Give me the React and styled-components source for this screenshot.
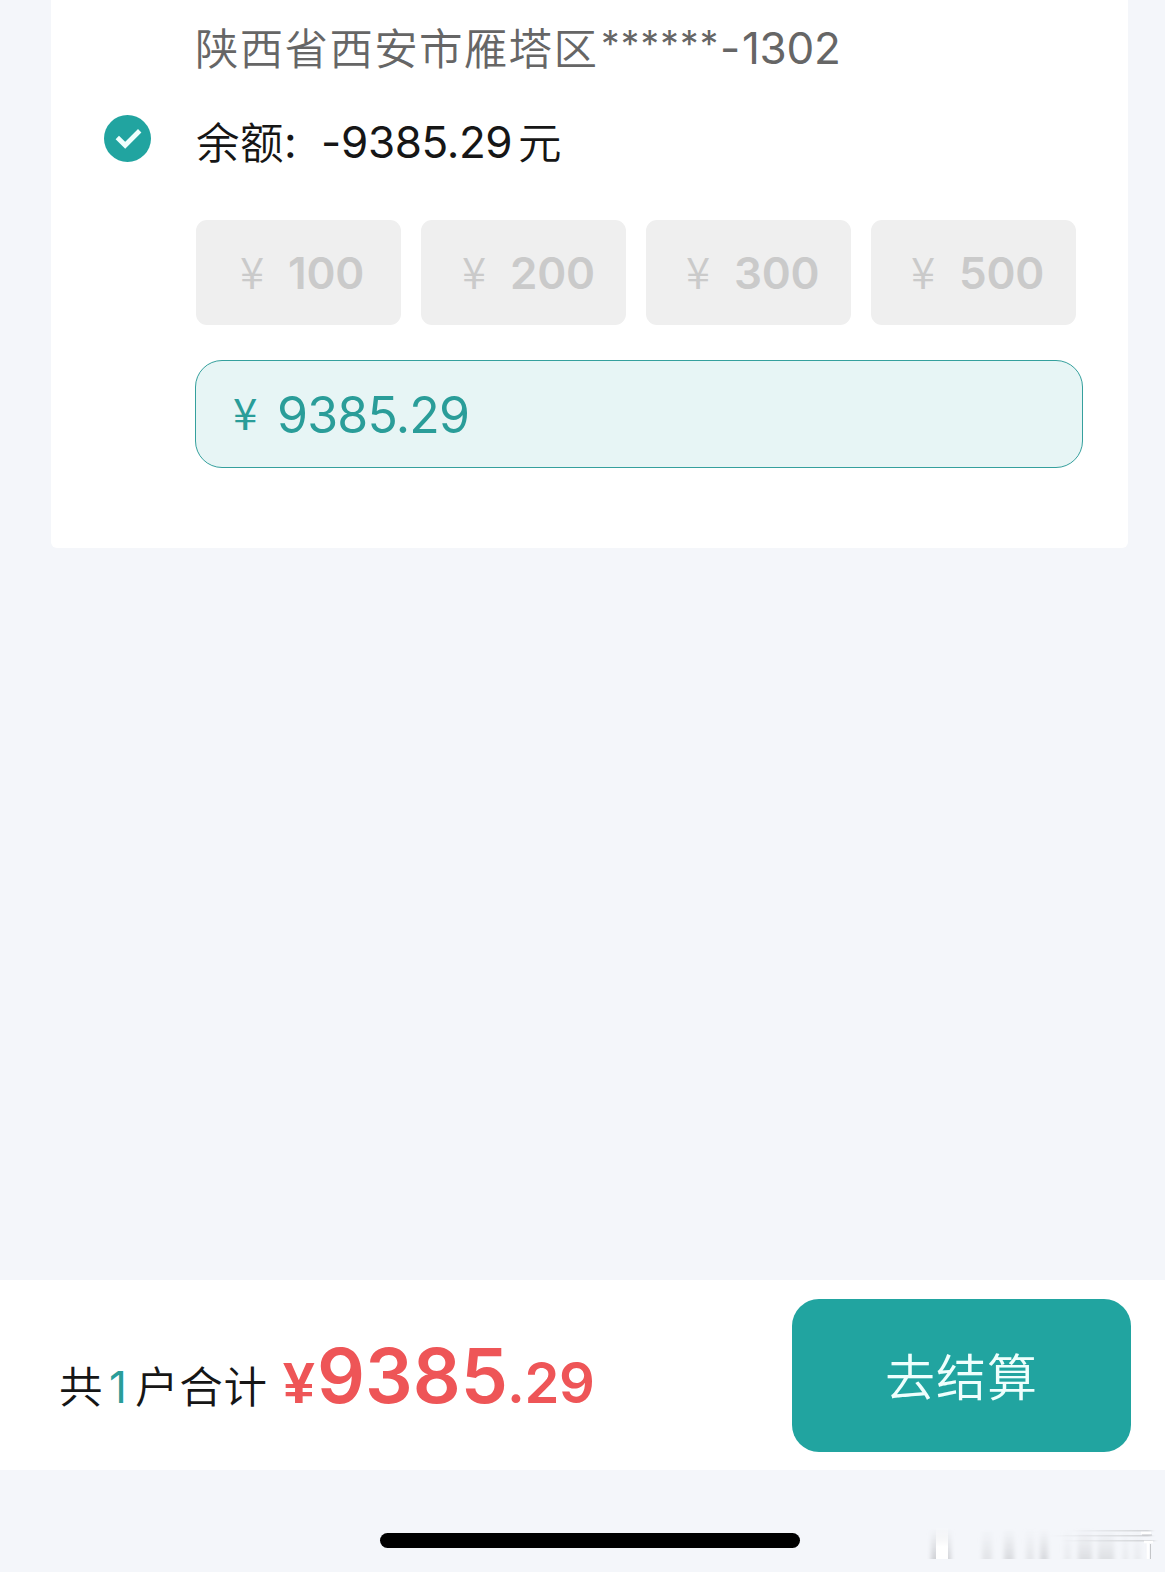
import React, { useState } from 'react';
import styled, { createGlobalStyle } from 'styled-components';

const GlobalStyle = createGlobalStyle`
  * { box-sizing: border-box; }
  body {
    margin: 0;
    background: #f4f6fa;
  }
`

const Page = styled.div`
  width: 1165px;
  height: 1572px;
  overflow: hidden;
  display: flex;
  flex-direction: column;
  background: #f4f6fa;
  color: #161616;
  font-family: Inter, "Noto Sans CJK SC", sans-serif;
`

const Card = styled.section`
  width: 1077px;
  height: 548px;
  margin-left: 51px;
  padding: 16px 45px 0 53px;
  background: #fff;
  border-radius: 0 0 6px 6px;
`

const Line = styled.div`
  display: flex;
  align-items: baseline;
  height: ${p => p.$height}px;
  line-height: ${p => p.$leading || 64}px;
  white-space: pre;
  padding-left: ${p => p.$indent || 0}px;
  color: ${p => p.$color || 'inherit'};
`

// pieces of a line, each one keeps its own tracking
const Piece = styled.span`
  flex: none;
  width: ${p => p.$width}px;
  font-size: ${p => p.$size || 44}px;
  font-weight: ${p => p.$weight || 400};
  letter-spacing: ${p => p.$track || 0}px;
  color: ${p => p.$color || 'inherit'};
`

const Han = styled(Piece)`
  align-self: flex-start;
  font-family: "Noto Sans CJK SC", sans-serif;
  font-size: 43.5px;
  font-weight: 350;
  line-height: ${p => p.$leading || 64}px;
`

const Stars = styled(Piece)`
  align-self: flex-start;
  padding-left: 2px;
  line-height: 56px;
`

const Yen = styled.span`
  flex: none;
  align-self: flex-start;
  font-family: "Noto Sans CJK SC", sans-serif;
  font-size: 44px;
  font-weight: ${p => p.$weight || 350};
  line-height: ${p => p.$leading}px;
  width: ${p => p.$width}px;
`

const BalanceRow = styled.div`
  display: flex;
  height: 111px;
`

const Check = styled.button`
  width: 47px;
  height: 47px;
  margin: 6px 45px 0 0;
  padding: 0;
  border: 0;
  background: none;

  svg { display: block; }
`

const Amounts = styled.div`
  display: flex;
  gap: 20.5px;
  margin-left: 92px;
`

const Amount = styled.button`
  display: flex;
  align-items: baseline;
  width: 204.5px;
  height: 105px;
  padding: 0 0 0 ${p => p.$pad}px;
  border: 0;
  border-radius: 11px;
  background: #efefef;
  color: #cacaca;
  font-family: inherit;
  line-height: 107px;
  text-align: left;
`

const Field = styled.div`
  display: flex;
  align-items: baseline;
  width: 888px;
  height: 108px;
  margin: 35px 0 0 91px;
  padding-left: 37px;
  border: 1.5px solid #35a09d;
  border-radius: 27px;
  background: #e7f5f5;
  color: #2a9d99;
  line-height: 108px;
`

const Footer = styled.footer`
  display: flex;
  justify-content: space-between;
  height: 190px;
  margin-top: 732px;
  padding: 19px 34px 0 59px;
  background: #fff;
`

const Total = styled.div`
  display: flex;
  align-items: baseline;
  line-height: 153px;
  white-space: pre;
`

const TotalText = styled(Piece)`
  font-family: "Noto Sans CJK SC", sans-serif;
  font-size: 43.5px;
  font-weight: 350;
`

const Price = styled.div`
  display: flex;
  align-items: baseline;
  color: #ee5557;
`

const PriceYen = styled(Piece)`
  font-family: "Liberation Sans", sans-serif;
  font-weight: 700;
`

const PayButton = styled.button`
  width: 339px;
  height: 153px;
  padding: 0 0 3px 0;
  border: 0;
  border-radius: 27px;
  background: #21a4a0;
  color: #effffd;
  font-family: "Noto Sans CJK SC", sans-serif;
  font-weight: 350;
  font-size: 50px;
  letter-spacing: 1px;
`

const BottomBar = styled.div`
  display: flex;
  justify-content: flex-end;
  height: 102px;
`

const HomeBar = styled.div`
  width: 420px;
  height: 15px;
  margin: 63px 120px 0 0;
  border-radius: 8px;
  background: #000;
`

const Smear = styled.svg`
  display: block;
  margin-top: 52px;
`

const amounts = [
  { value: 100, pad: 44 },
  { value: 200, pad: 41 },
  { value: 300, pad: 40 },
  { value: 500, pad: 40 },
]

// x, width, opacity of each faded stroke
const strokes = [
  [22, 10, .5], [44, 10, .75], [66, 8, .45], [80, 8, .8],
  [104, 7, .3], [118, 14, .65], [138, 16, .6], [163, 5, .35], [174, 7, .3],
]

function App() {
  const [checked, setChecked] = useState(true)

  return (
    <>
      <GlobalStyle />
      <Page>
        <Card>
          <Line $height={93} $indent={91} $color="#666">
            <Han $width={404} $track={1.3} $leading={61}>陕西省西安市雁塔区</Han>
            <Stars $size={37} $width={121} $track={1.2}>******</Stars>
            <Piece $width={22}>-</Piece>
            <Piece $width={110} $track={-.3}>1302</Piece>
          </Line>

          <BalanceRow>
            <Check type="button" onClick={() => setChecked(!checked)}>
              <svg width="47" height="47" viewBox="0 0 47 47">
                <circle cx="23.5" cy="23.5" r="23.5" fill={checked ? '#21a4a0' : '#ddd'} />
                <path d="M13.3 22.5 21.2 30.3 35.7 15.8" fill="none" stroke="#effffd" strokeWidth="4.8" />
              </svg>
            </Check>
            <Line $height={64} $leading={66}>
              <Han $width={88} $track={.5} $leading={63}>余额</Han>
              <Piece $width={37}>:</Piece>
              <Piece $width={20}>-</Piece>
              <Piece $width={177} $track={-.4}>9385.29</Piece>
              <Han $width={44} $leading={63}>元</Han>
            </Line>
          </BalanceRow>

          <Amounts>
            {amounts.map(a => (
              <Amount key={a.value} type="button" $pad={a.pad}>
                <Yen $width={48} $leading={101}>¥</Yen>
                <Piece $weight={600} $track={-.2}>{a.value}</Piece>
              </Amount>
            ))}
          </Amounts>

          <Field>
            <Yen $width={44} $weight={400} $leading={101}>¥</Yen>
            <Piece $size={50} $track={-.8}>9385.29</Piece>
          </Field>
        </Card>

        <Footer>
          <Total>
            <TotalText $width={50}>共</TotalText>
            <Piece $width={26} $color="#2a9d99">1</Piece>
            <TotalText $width={148} $track={.8}>户合计</TotalText>
            <Price>
              <PriceYen $size={57} $width={34}>¥</PriceYen>
              <Piece $size={75} $weight={600} $width={190}>9385</Piece>
              <Piece $size={56} $weight={600} $track={-.4}>.29</Piece>
            </Price>
          </Total>
          <PayButton type="button">去结算</PayButton>
        </Footer>

        <BottomBar>
          <HomeBar />
          <Smear width="245" height="50" viewBox="-40 0 245 50">
            <defs>
              <linearGradient id="fade" x1="0" y1="0" x2="0" y2="1">
                <stop offset="0" stopColor="#d6d8dc" stopOpacity="0" />
                <stop offset="1" stopColor="#d0d2d6" />
              </linearGradient>
              <linearGradient id="light" x1="0" y1="0" x2="0" y2="1">
                <stop offset="0" stopColor="#fff" stopOpacity=".1" />
                <stop offset=".6" stopColor="#fff" />
              </linearGradient>
              <linearGradient id="across" x1="0" y1="0" x2="1" y2="0">
                <stop offset="0" stopColor="#c8cacd" stopOpacity="0" />
                <stop offset="1" stopColor="#c8cacd" stopOpacity=".8" />
              </linearGradient>
              <filter id="soft" x="-20%" y="-20%" width="140%" height="140%">
                <feGaussianBlur stdDeviation="2 .6" />
              </filter>
            </defs>
            <g filter="url(#soft)">
              <rect x="-29" y="6" width="20" height="31" fill="url(#fade)" />
              {strokes.map(s => (
                <rect key={s[0]} x={s[0]} y="6" width={s[1]} height="31" opacity={s[2]} fill="url(#fade)" />
              ))}
              <rect x="110" y="8" width="81" height="1.5" fill="url(#across)" />
              <rect x="90" y="13" width="101" height="1.5" fill="url(#across)" />
              <rect x="100" y="18" width="94" height="1.5" fill="url(#across)" />
            </g>
            <rect x="-24" y="6" width="12" height="31" fill="url(#light)" />
            <path d="M181 11h10M184 20h9M188 20v17" fill="none" stroke="#fff" strokeWidth="2.5" />
            <path d="M190.5 22v15M182 13h10" fill="none" stroke="#c4c6c9" strokeWidth="1" />
          </Smear>
        </BottomBar>
      </Page>
    </>
  )
}

export default App;
